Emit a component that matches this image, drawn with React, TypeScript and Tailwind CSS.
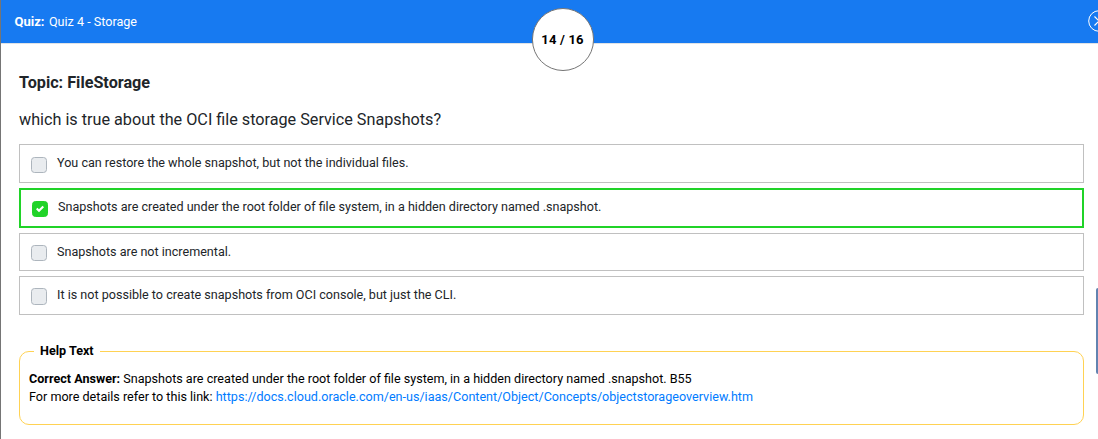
type Option = {
  text: string;
  checked?: boolean;
  box: string;
  control: string;
  label: string;
};

const options: Option[] = [
  {
    text: "You can restore the whole snapshot, but not the individual files.",
    box: "h-[39px]",
    control: "h-4 mt-3",
    label: "mt-2",
  },
  {
    text: "Snapshots are created under the root folder of file system, in a hidden directory named .snapshot.",
    checked: true,
    box: "h-10",
    control: "h-4 mt-[11px]",
    label: "mt-[7px]",
  },
  { text: "Snapshots are not incremental.", box: "h-[38px]", control: "h-4 mt-[11px]", label: "mt-2" },
  {
    text: "It is not possible to create snapshots from OCI console, but just the CLI.",
    box: "h-[39px]",
    control: "h-[17px] mt-[11px]",
    label: "mt-2",
  },
];

function Checkbox({ checked, className }: { checked?: boolean; className: string }) {
  return (
    <span
      role="checkbox"
      aria-checked={!!checked}
      className={`flex w-4 shrink-0 items-center justify-center rounded-[3.5px] border ${
        checked ? "border-[#20d328] bg-[#20d328]" : "border-[#adb5bd] bg-[#e9ecef]"
      } ${className}`}
    >
      {checked && (
        <svg viewBox="0 0 8 8" className="size-2" fill="#fff">
          <path d="M6.564.75l-3.59 3.612-1.538-1.55L0 4.26 2.974 7.25 8 2.193z" />
        </svg>
      )}
    </span>
  );
}

function OptionRow({ text, checked, box, control, label }: Option) {
  return (
    <div
      className={`flex items-start ${box} ${
        checked ? "border-2 border-[#20d328]" : "border border-[#c0c0c0]"
      } pl-[11px]`}
    >
      <Checkbox checked={checked} className={control} />
      <span className={`ml-2.5 whitespace-nowrap text-[12.59px] leading-[19px] text-[#212529] ${label}`}>{text}</span>
    </div>
  );
}

export default function App() {
  return (
    <div className="h-[439px] w-[1098px] overflow-hidden border-l border-[#757575] bg-white font-['Roboto',sans-serif] text-[#212529]">
      <header className="relative flex h-11 items-start justify-between border-b border-[#dee2e6] bg-[#177af1] pl-[13.5px] text-white">
        <h1 className="mt-3 whitespace-nowrap text-[12.6px] font-normal leading-[19px]">
          <b className="mr-[1.3px] text-[13px] font-bold">Quiz:</b> Quiz 4 - Storage
        </h1>
        <div className="absolute left-[531px] top-2 flex h-[63px] w-[62px] items-center justify-center rounded-full border border-[#757575] bg-white pr-px text-[13px] font-bold tracking-[0.2px] text-black">
          14 / 16
        </div>
        <svg viewBox="0 0 22 22" className="-mr-3 mt-2.5 size-[22px] shrink-0" fill="none" stroke="#fff">
          <circle cx="11" cy="11" r="10.3" strokeWidth="1" />
          <path d="M6.5 6.5l9 9m0-9l-9 9" strokeWidth="1.2" />
        </svg>
      </header>

      <div className="flex">
        <main className="ml-[18px] w-[1065px] shrink-0">
          <h2 className="mt-[27px] text-[16.2px] font-bold leading-6">Topic: FileStorage</h2>
          <p className="mt-[13px] text-[16.2px] leading-6">which is true about the OCI file storage Service Snapshots?</p>
          <div className="mt-3 flex flex-col gap-[5px]">
            {options.map((option) => (
              <OptionRow key={option.text} {...option} />
            ))}
          </div>

          <fieldset className="mt-[26px] h-[84px] rounded-[10px] border border-[#ffd253] px-[9px] text-[12.59px] leading-[18px] text-black">
            <legend className="ml-[5px] h-5 px-1.5 text-[12.6px] font-bold leading-5">Help Text</legend>
            <p className="mt-[9px]">
              <b className="font-bold">Correct Answer:</b> Snapshots are created under the root folder of file system, in a
              hidden directory named .snapshot. B55
            </p>
            <p>
              For more details refer to this link:{" "}
              <span className="text-[#007bff]">
                https://docs.cloud.oracle.com/en-us/iaas/Content/Object/Concepts/objectstorageoverview.htm
              </span>
            </p>
          </fieldset>
        </main>
        <div className="ml-3 mt-[244px] h-[86px] w-[2px] rounded-l-sm bg-[#6283b0]" />
      </div>
    </div>
  );
}
